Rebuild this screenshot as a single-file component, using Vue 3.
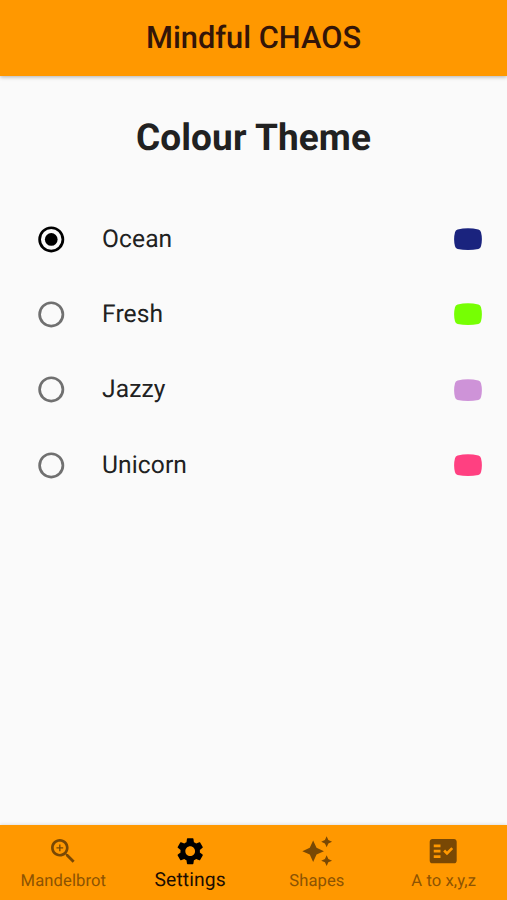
<script setup>
import { ref } from 'vue'

const themes = [
  { name: 'Ocean', color: '#1a237e' },
  { name: 'Fresh', color: '#76ff03' },
  { name: 'Jazzy', color: '#ce93d8' },
  { name: 'Unicorn', color: '#ff4081' }
]
const selected = ref('Ocean')

const tabs = [
  { name: 'Mandelbrot', icon: 'M15.5 14h-.79l-.28-.27C15.41 12.59 16 11.11 16 9.5 16 5.91 13.09 3 9.5 3S3 5.91 3 9.5 5.91 16 9.5 16c1.61 0 3.09-.59 4.23-1.57l.27.28v.79l5 4.99L20.49 19l-4.99-5zm-6 0C7.01 14 5 11.99 5 9.5S7.01 5 9.5 5 14 7.01 14 9.5 11.99 14 9.5 14zM12 10h-2v2H9v-2H7V9h2V7h1v2h2v1z' },
  { name: 'Settings', icon: 'M19.14 12.94c.04-.3.06-.61.06-.94 0-.32-.02-.64-.07-.94l2.03-1.58c.18-.14.23-.41.12-.61l-1.92-3.32c-.12-.22-.37-.29-.59-.22l-2.39.96c-.5-.38-1.03-.7-1.62-.94l-.36-2.54c-.04-.24-.24-.41-.48-.41h-3.84c-.24 0-.43.17-.47.41l-.36 2.54c-.59.24-1.13.57-1.62.94l-2.39-.96c-.22-.08-.47 0-.59.22L2.74 8.87c-.12.21-.08.47.12.61l2.03 1.58c-.05.3-.09.63-.09.94s.02.64.07.94l-2.03 1.58c-.18.14-.23.41-.12.61l1.92 3.32c.12.22.37.29.59.22l2.39-.96c.5.38 1.03.7 1.62.94l.36 2.54c.05.24.24.41.48.41h3.84c.24 0 .44-.17.47-.41l.36-2.54c.59-.24 1.13-.56 1.62-.94l2.39.96c.22.08.47 0 .59-.22l1.92-3.32c.12-.22.07-.47-.12-.61l-2.01-1.58zM12 15.6c-1.98 0-3.6-1.62-3.6-3.6s1.62-3.6 3.6-3.6 3.6 1.62 3.6 3.6-1.62 3.6-3.6 3.6z' },
  { name: 'Shapes', icon: 'M19 9l1.25-2.75L23 5l-2.75-1.25L19 1l-1.25 2.75L15 5l2.75 1.25L19 9zm-7.5.5L9 4 6.5 9.5 1 12l5.5 2.5L9 20l2.5-5.5L17 12l-5.5-2.5zM19 15l-1.25 2.75L15 19l2.75 1.25L19 23l1.25-2.75L23 19l-2.75-1.25L19 15z' },
  { name: 'A to x,y,z', icon: 'M20 3H4c-1.1 0-2 .9-2 2v14c0 1.1.9 2 2 2h16c1.1 0 2-.9 2-2V5c0-1.1-.9-2-2-2zM10 17H5v-2h5v2zm0-4H5v-2h5v2zm0-4H5V7h5v2zm4.82 6L12 12.16l1.41-1.41 1.41 1.42L17.99 9l1.42 1.42L14.82 15z' }
]
const active = ref('Settings')
</script>

<template>
  <div class="screen">
    <header class="bar">Mindful CHAOS</header>
    <main class="content">
      <h1>Colour Theme</h1>
      <div v-for="t in themes" :key="t.name" class="row" @click="selected = t.name">
        <svg class="radio" :class="{ on: selected === t.name }" viewBox="0 0 24 24">
          <circle class="ring" cx="12" cy="12.1" r="8.6" />
          <circle v-if="selected === t.name" class="dot" cx="12" cy="12.1" r="4.7" />
        </svg>
        <span class="label">{{ t.name }}</span>
        <svg class="swatch" viewBox="0 0 30 24">
          <path :fill="t.color" d="M4.6 2.4Q15 .2 25.4 2.4Q27.5 2.9 28 5.2Q29.8 12.2 28 19.2Q27.5 21.5 25.4 22Q15 24.2 4.6 22Q2.5 21.5 2 19.2Q.2 12.2 2 5.2Q2.5 2.9 4.6 2.4Z" />
        </svg>
      </div>
    </main>
    <nav class="tabs">
      <div v-for="t in tabs" :key="t.name" class="tab" :class="{ active: active === t.name }" @click="active = t.name">
        <svg class="icon" viewBox="0 0 24 24"><path :d="t.icon" /></svg>
        <span class="caption">{{ t.name }}</span>
      </div>
    </nav>
  </div>
</template>

<style>
body { margin: 0; }
</style>

<style scoped>
.screen {
  height: 900px;
  display: flex;
  flex-direction: column;
  background: #fafafa;
  font-family: Roboto, sans-serif;
  color: #212121;
  overflow: hidden;
  text-rendering: geometricPrecision;
}
.bar {
  height: 76px;
  flex: none;
  line-height: 75px;
  text-align: center;
  background: #ff9800;
  color: #331508;
  font-size: 30.8px;
  font-weight: 500;
  box-shadow: 0 1px 4px rgba(0, 0, 0, 0.3);
}
.content { flex: 1; }
h1 {
  margin: 39px 0 38.2px;
  height: 48px;
  line-height: 48px;
  font-size: 37px;
  font-weight: 700;
  letter-spacing: 0.1px;
  text-align: center;
}
.row {
  height: 75.4px;
  display: flex;
  align-items: center;
  padding: 0 24px 0 35px;
}
.radio { width: 32.5px; height: 32.5px; margin-right: 34.5px; }
.ring { fill: none; stroke: #707070; stroke-width: 2; }
.on .ring { stroke: #000; }
.dot { fill: #000; }
.label { flex: 1; padding-top: 1.6px; font-size: 24.6px; letter-spacing: 0.1px; line-height: 30px; }
.swatch { width: 30px; height: 24px; }
.tabs {
  height: 75px;
  flex: none;
  display: flex;
  background: #ff9800;
  box-shadow: 0 -1px 3px rgba(0, 0, 0, 0.1);
}
.tab {
  flex: 1;
  display: flex;
  flex-direction: column;
  align-items: center;
  padding-top: 10.3px;
  color: #8c5303;
}
.icon { width: 32.4px; height: 32.4px; fill: #794804; }
.caption { font-size: 16.6px; line-height: 22px; margin-top: 3px; letter-spacing: 0.1px; white-space: nowrap; }
.active { color: #1c0d02; }
.active .icon { fill: #000; }
.active .caption { font-size: 19.3px; margin-top: 1.5px; }
</style>
